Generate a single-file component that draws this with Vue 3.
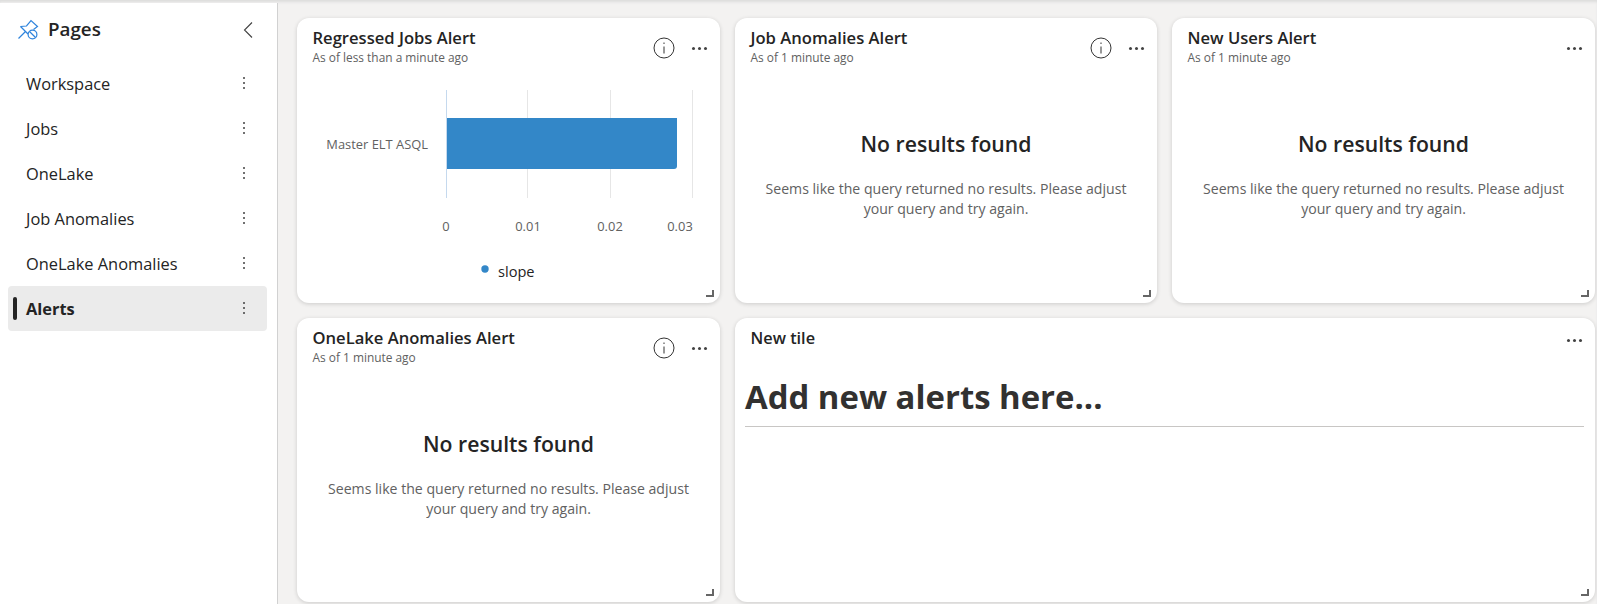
<template>
  <div class="page">
    <aside class="sidebar">
      <div class="side-head">
        <svg class="pin" width="22" height="22" viewBox="0 0 22 22" fill="none" stroke="#2f84dc" stroke-width="1.2">
          <path d="M0.5 19.5 L7.5 12.5" />
          <path d="M2.5 7.5 L8.5 7 L13 1.5 L19.5 7.5 L15.5 10.5" />
          <path d="M2.5 7.5 L10 15" />
          <circle cx="14.5" cy="15.5" r="4.4" />
          <path d="M11.5 12.5 L17.5 18.5" />
        </svg>
        <span class="side-title">Pages</span>
        <svg class="chevron" width="10" height="16" viewBox="0 0 10 16" fill="none" stroke="#424242" stroke-width="1.1">
          <path d="M9 0.5 L1.5 8 L9 15.5" />
        </svg>
      </div>
      <ul class="pages">
        <li v-for="p in pages" :key="p" class="page-item" :class="{ active: p === 'Alerts' }">
          <span class="page-name">{{ p }}</span>
          <span class="kebab"><i></i><i></i><i></i></span>
        </li>
      </ul>
    </aside>

    <main class="canvas">
      <section class="tile">
        <header class="tile-head">
          <div>
            <h2 class="tile-title">Regressed Jobs Alert</h2>
            <p class="tile-sub">As of less than a minute ago</p>
          </div>
          <div class="tile-actions">
            <svg class="info" width="22" height="22" viewBox="0 0 22 22" fill="none" stroke="#333">
              <circle cx="11" cy="11" r="10" />
              <path d="M11 9.5 V16.5" />
              <path d="M11 5.5 V7" />
            </svg>
            <span class="dots"><i></i><i></i><i></i></span>
          </div>
        </header>
        <svg class="chart" width="423" height="240" viewBox="0 0 423 240">
          <path v-for="x in [230.5, 313.5, 395.5]" :key="x" :d="`M${x} 0 V108`" stroke="#e6e6e6" />
          <path d="M149.5 0 V108" stroke="#c5d9ee" />
          <path d="M150 28 H380 V76 a3 3 0 0 1 -3 3 H150 Z" fill="#3387c8" />
          <text x="131" y="59" text-anchor="end" class="axis">Master ELT ASQL</text>
          <text x="149" y="141" text-anchor="middle" class="axis">0</text>
          <text x="231" y="141" text-anchor="middle" class="axis">0.01</text>
          <text x="313" y="141" text-anchor="middle" class="axis">0.02</text>
          <text x="383" y="141" text-anchor="middle" class="axis">0.03</text>
          <circle cx="188" cy="179" r="3.7" fill="#3387c8" />
          <text x="201" y="187" class="legend">slope</text>
        </svg>
        <span class="corner"></span>
      </section>

      <section v-for="t in emptyTop" :key="t.title" class="tile">
        <header class="tile-head">
          <div>
            <h2 class="tile-title">{{ t.title }}</h2>
            <p class="tile-sub">As of 1 minute ago</p>
          </div>
          <div class="tile-actions">
            <svg v-if="t.info" class="info" width="22" height="22" viewBox="0 0 22 22" fill="none" stroke="#333">
              <circle cx="11" cy="11" r="10" />
              <path d="M11 9.5 V16.5" />
              <path d="M11 5.5 V7" />
            </svg>
            <span class="dots"><i></i><i></i><i></i></span>
          </div>
        </header>
        <div class="empty">
          <h3>No results found</h3>
          <p>Seems like the query returned no results. Please adjust your query and try again.</p>
        </div>
        <span class="corner"></span>
      </section>

      <section class="tile">
        <header class="tile-head">
          <div>
            <h2 class="tile-title">OneLake Anomalies Alert</h2>
            <p class="tile-sub">As of 1 minute ago</p>
          </div>
          <div class="tile-actions">
            <svg class="info" width="22" height="22" viewBox="0 0 22 22" fill="none" stroke="#333">
              <circle cx="11" cy="11" r="10" />
              <path d="M11 9.5 V16.5" />
              <path d="M11 5.5 V7" />
            </svg>
            <span class="dots"><i></i><i></i><i></i></span>
          </div>
        </header>
        <div class="empty">
          <h3>No results found</h3>
          <p>Seems like the query returned no results. Please adjust your query and try again.</p>
        </div>
        <span class="corner"></span>
      </section>

      <section class="tile wide">
        <header class="tile-head">
          <h2 class="tile-title plain">New tile</h2>
          <div class="tile-actions top">
            <span class="dots"><i></i><i></i><i></i></span>
          </div>
        </header>
        <div class="markdown">
          <h1>Add new alerts here...</h1>
          <hr />
        </div>
        <span class="corner"></span>
      </section>
    </main>
  </div>
</template>

<script setup>
const pages = ['Workspace', 'Jobs', 'OneLake', 'Job Anomalies', 'OneLake Anomalies', 'Alerts']

const emptyTop = [
  { title: 'Job Anomalies Alert', info: true },
  { title: 'New Users Alert', info: false }
]
</script>

<style>
html, body {
  margin: 0;
  background: #f3f2f1;
}
</style>

<style scoped>
.page {
  display: flex;
  width: 1597px;
  height: 604px;
  overflow: hidden;
  font-family: "Open Sans", "Noto Sans", sans-serif;
  color: #242424;
  background: #f3f2f1;
  box-shadow: inset 0 3px 3px -1px #dcdcdc;
}
.sidebar {
  width: 277px;
  margin-top: 3px;
  background: #fff;
  border-right: 1px solid #d1d1d1;
  flex-shrink: 0;
}
.side-head {
  display: flex;
  align-items: center;
  height: 54px;
  padding: 0 24px 0 18px;
}
.side-title {
  margin: 0 0 2px 8px;
  font-size: 18.8px;
  font-weight: 600;
  flex: 1;
}
.pages {
  list-style: none;
  margin: 4px 0 0;
  padding: 0 10px 0 8px;
}
.page-item {
  position: relative;
  display: flex;
  align-items: center;
  justify-content: space-between;
  box-sizing: border-box;
  height: 45px;
  padding: 0 22px 2px 18px;
  font-size: 16.4px;
  border-radius: 4px;
}
.page-name {
  padding-top: 2px;
}
.page-item.active {
  background: #ebebeb;
  font-weight: 700;
}
.page-item.active::before {
  content: "";
  position: absolute;
  left: 5px;
  top: 11px;
  bottom: 11px;
  width: 4px;
  border-radius: 2px;
  background: #242424;
}
.kebab {
  display: flex;
  flex-direction: column;
  gap: 3px;
}
.kebab i {
  width: 2px;
  height: 2px;
  border-radius: 50%;
  background: #424242;
}
.canvas {
  display: grid;
  grid-template-columns: 423px 422px 423px;
  grid-template-rows: 285px 284px;
  gap: 15px;
  padding: 18px 0 0 19px;
}
.tile {
  position: relative;
  background: #fff;
  border-radius: 12px;
  box-shadow: 0 1px 4px rgba(0, 0, 0, 0.16);
  overflow: hidden;
}
.wide {
  grid-column: span 2;
}
.tile-head {
  display: flex;
  justify-content: space-between;
  padding: 9px 13px 0 15.5px;
}
.tile-title {
  margin: 0;
  font-size: 16.6px;
  font-weight: 600;
  line-height: 22px;
}
.tile-title.plain {
  font-size: 16.3px;
  line-height: 23px;
}
.tile-sub {
  margin: 0;
  font-size: 11.9px;
  line-height: 16px;
  color: #616161;
}
.tile-actions {
  display: flex;
  align-items: center;
  gap: 17px;
  height: 22px;
  margin-top: 10px;
}
.tile-actions.top {
  margin-top: 2px;
}
.dots {
  display: flex;
  gap: 3px;
}
.dots i {
  width: 3px;
  height: 3px;
  border-radius: 50%;
  background: #424242;
}
.chart {
  display: block;
  margin-top: 25px;
}
.axis {
  font-size: 12.9px;
  fill: #616161;
}
.legend {
  font-size: 14.6px;
  fill: #242424;
}
.corner {
  position: absolute;
  right: 6px;
  bottom: 6px;
  width: 8px;
  height: 7px;
  box-sizing: border-box;
  border-right: 2px solid #666;
  border-bottom: 2px solid #666;
}
.empty {
  text-align: center;
  padding: 0 26px;
  margin-top: 64px;
}
.empty h3 {
  margin: 0;
  font-size: 21.2px;
  line-height: 30px;
  font-weight: 600;
}
.empty p {
  margin: 20px 0 0;
  font-size: 14.1px;
  line-height: 20px;
  color: #616161;
}
.markdown {
  padding: 26px 11px 0 10px;
}
.markdown h1 {
  margin: 0;
  font-size: 32.9px;
  line-height: 40px;
  font-weight: 700;
  color: #323130;
}
.markdown hr {
  margin: 9px 0 0;
  border: 0;
  border-top: 1px solid #c8c6c4;
}
</style>
